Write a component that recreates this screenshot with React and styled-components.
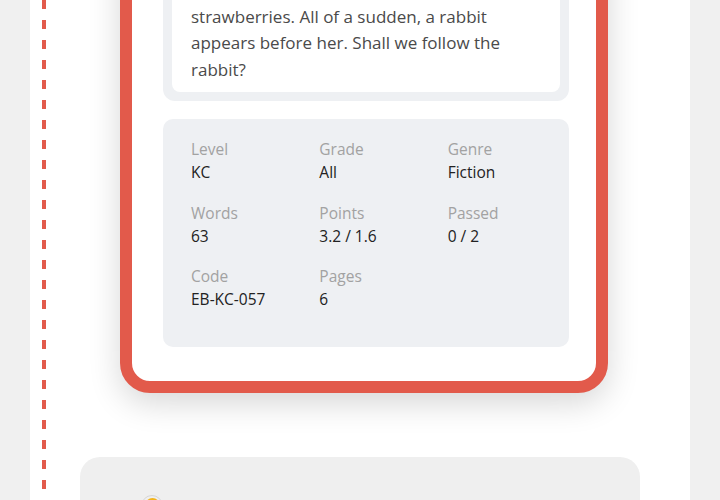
import React from 'react'
import styled, { createGlobalStyle } from 'styled-components'

const Global = createGlobalStyle`
  html, body {
    margin: 0;
    padding: 0;
    background: #f0f0f0;
    overflow: hidden;
  }
  body {
    font-family: "Open Sans", "Noto Sans", sans-serif;
  }
`

const Page = styled.div`
  height: 500px;
  padding: 0 30px;
  display: flex;
`

const Panel = styled.div`
  flex: 1;
  background: #fff;
  display: flex;
  padding-left: 12px;
`

const Rail = styled.div`
  width: 4px;
  flex: none;
  background: repeating-linear-gradient(
    to bottom,
    #e25a4b 0px,
    #e25a4b 9px,
    transparent 9px,
    transparent 20px
  );
`

const Content = styled.div`
  flex: 1;
  display: flex;
  flex-direction: column;
  align-items: flex-start;
`

const Frame = styled.div`
  margin-top: -83px;
  margin-left: 74px;
  width: 488px;
  box-sizing: border-box;
  border: 12px solid #e25a4b;
  border-radius: 30px;
  background: #fff;
  padding: 31px 27px 34px 31px;
  display: flex;
  flex-direction: column;
  gap: 18px;
  box-shadow: 0 10px 32px rgba(0, 0, 0, 0.16);
`

const StoryWrap = styled.div`
  background: #eef0f3;
  border-radius: 12px;
  padding: 9px;
`

const Story = styled.p`
  margin: 0;
  background: #fff;
  border-radius: 8px;
  padding: 8px 19px 9px;
  font-size: 17px;
  line-height: 26.5px;
  color: #4a4a4a;
`

const Info = styled.div`
  background: #eef0f3;
  border-radius: 10px;
  padding: 19px 28px 36px;
  display: grid;
  grid-template-columns: repeat(3, 1fr);
  column-gap: 35px;
  row-gap: 17.5px;
`

const Cell = styled.div`
  display: flex;
  flex-direction: column;
  font-size: 15.5px;
  line-height: 23px;
`

const Label = styled.span`
  color: #a2a2a2;
`

const Value = styled.span`
  color: #222;
`

const Card = styled.div`
  margin-top: 64px;
  margin-left: 34px;
  width: 560px;
  height: 200px;
  flex: none;
  background: #efefef;
  border-radius: 20px;
  padding: 38px 0 0 61px;
  box-sizing: border-box;
`

const Avatar = styled.div`
  width: 22px;
  height: 22px;
  border-radius: 50%;
  border: 1px solid #d6d6d6;
  display: flex;
  align-items: flex-start;
  justify-content: center;
  padding-top: 2px;
  box-sizing: border-box;
  &::after {
    content: '';
    width: 15px;
    height: 15px;
    border-radius: 50%;
    background: #f3b41b;
  }
`

const details = [
  ['Level', 'KC'],
  ['Grade', 'All'],
  ['Genre', 'Fiction'],
  ['Words', '63'],
  ['Points', '3.2 / 1.6'],
  ['Passed', '0 / 2'],
  ['Code', 'EB-KC-057'],
  ['Pages', '6'],
]

export default function App() {
  return (
    <>
      <Global />
      <Page>
        <Panel>
          <Rail />
          <Content>
            <Frame>
              <StoryWrap>
                <Story>
                  Sally is out in the meadow to collect strawberries. All of a sudden, a rabbit
                  appears before her. Shall we follow the rabbit?
                </Story>
              </StoryWrap>
              <Info>
                {details.map(([label, value]) => (
                  <Cell key={label}>
                    <Label>{label}</Label>
                    <Value>{value}</Value>
                  </Cell>
                ))}
              </Info>
            </Frame>
            <Card>
              <Avatar />
            </Card>
          </Content>
        </Panel>
      </Page>
    </>
  )
}
